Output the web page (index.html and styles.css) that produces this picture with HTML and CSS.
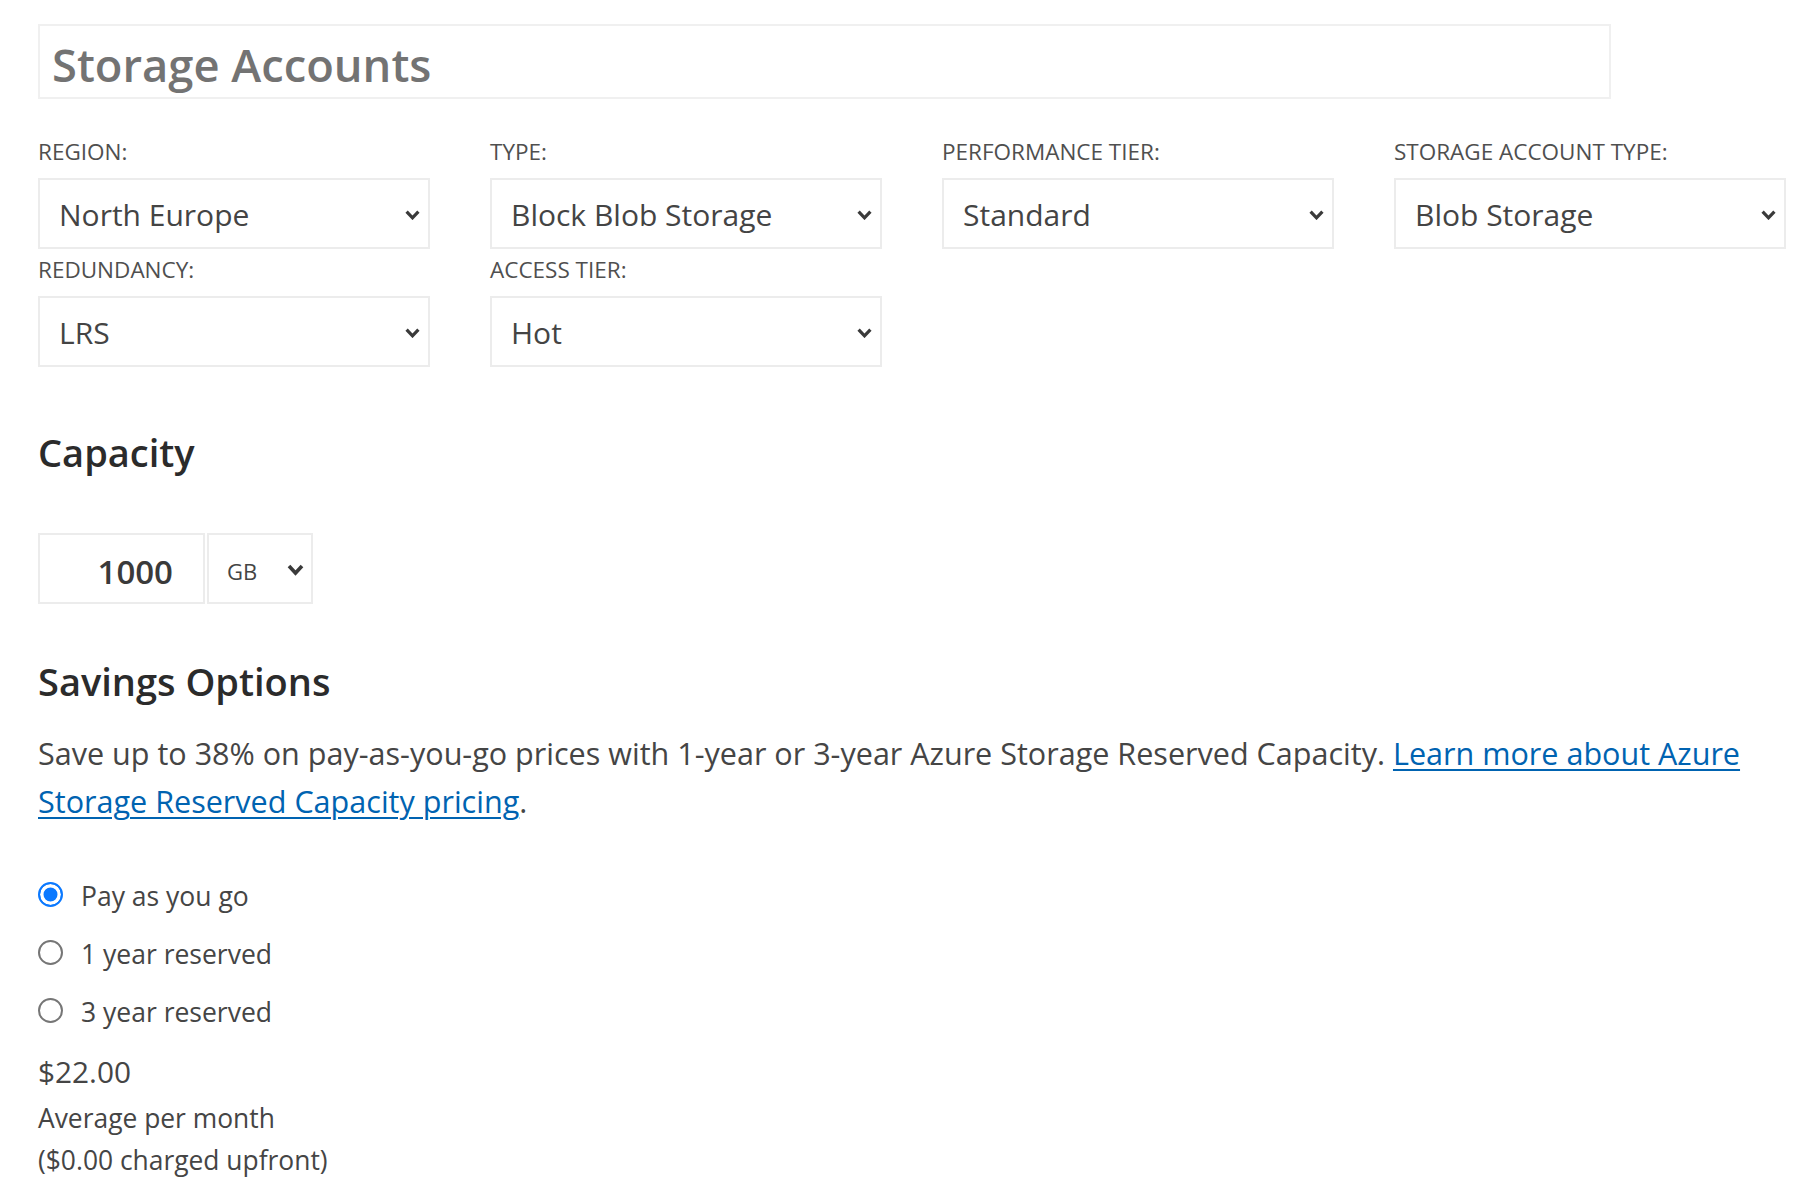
FILE: index.html
```html
<!DOCTYPE html>
<html lang="en">
<head>
<meta charset="utf-8">
<title>Storage Accounts</title>
<link rel="stylesheet" href="styles.css">
</head>
<body>
<main class="page">
  <div class="title-box">
    <h1 class="title">Storage Accounts</h1>
  </div>

  <div class="field-row field-row--first">
    <div class="field">
      <div class="field-label">REGION:</div>
      <div class="select"><span class="select-text">North Europe</span><svg class="chev" viewBox="0 0 15 10" width="15" height="10"><polyline points="1.6,1.6 7.5,7.8 13.4,1.6" fill="none" stroke="#3a3a3a" stroke-width="3.2"/></svg></div>
    </div>
    <div class="field">
      <div class="field-label">TYPE:</div>
      <div class="select"><span class="select-text">Block Blob Storage</span><svg class="chev" viewBox="0 0 15 10" width="15" height="10"><polyline points="1.6,1.6 7.5,7.8 13.4,1.6" fill="none" stroke="#3a3a3a" stroke-width="3.2"/></svg></div>
    </div>
    <div class="field">
      <div class="field-label">PERFORMANCE TIER:</div>
      <div class="select"><span class="select-text">Standard</span><svg class="chev" viewBox="0 0 15 10" width="15" height="10"><polyline points="1.6,1.6 7.5,7.8 13.4,1.6" fill="none" stroke="#3a3a3a" stroke-width="3.2"/></svg></div>
    </div>
    <div class="field">
      <div class="field-label">STORAGE ACCOUNT TYPE:</div>
      <div class="select"><span class="select-text">Blob Storage</span><svg class="chev" viewBox="0 0 15 10" width="15" height="10"><polyline points="1.6,1.6 7.5,7.8 13.4,1.6" fill="none" stroke="#3a3a3a" stroke-width="3.2"/></svg></div>
    </div>
  </div>

  <div class="field-row field-row--second">
    <div class="field">
      <div class="field-label">REDUNDANCY:</div>
      <div class="select"><span class="select-text">LRS</span><svg class="chev" viewBox="0 0 15 10" width="15" height="10"><polyline points="1.6,1.6 7.5,7.8 13.4,1.6" fill="none" stroke="#3a3a3a" stroke-width="3.2"/></svg></div>
    </div>
    <div class="field">
      <div class="field-label">ACCESS TIER:</div>
      <div class="select"><span class="select-text">Hot</span><svg class="chev" viewBox="0 0 15 10" width="15" height="10"><polyline points="1.6,1.6 7.5,7.8 13.4,1.6" fill="none" stroke="#3a3a3a" stroke-width="3.2"/></svg></div>
    </div>
  </div>

  <h2 class="section-heading heading-capacity">Capacity</h2>

  <div class="capacity-row">
    <div class="cap-input">1000</div>
    <div class="cap-unit"><span class="cap-unit-text">GB</span><svg class="chev-small" viewBox="0 0 17 12" width="17" height="12"><polyline points="2,2 8.5,9 15,2" fill="none" stroke="#3a3a3a" stroke-width="3.6"/></svg></div>
  </div>

  <h2 class="section-heading heading-savings">Savings Options</h2>

  <p class="savings-text">Save up to 38% on pay-as-you-go prices with 1-year or 3-year Azure Storage Reserved Capacity. <a class="link" href="#">Learn more about Azure Storage Reserved Capacity pricing</a>.</p>

  <div class="radio-group">
    <div class="radio-row"><span class="radio radio--checked"></span><span class="radio-label">Pay as you go</span></div>
    <div class="radio-row"><span class="radio"></span><span class="radio-label">1 year reserved</span></div>
    <div class="radio-row"><span class="radio"></span><span class="radio-label">3 year reserved</span></div>
  </div>

  <div class="price">$22.00</div>
  <div class="price-note">Average per month<br>($0.00 charged upfront)</div>
</main>
</body>
</html>
```

FILE: styles.css
```css
html, body {
  margin: 0;
  padding: 0;
  background: #ffffff;
}

body {
  font-family: "Open Sans", "Noto Sans", "DejaVu Sans", sans-serif;
  color: #454545;
}

.page {
  width: 1748px;
  padding: 24px 0 0 38px;
}

.title-box {
  box-sizing: border-box;
  width: 1573px;
  height: 75px;
  border: 2px solid #f0f0f0;
  padding: 16px 12px 0 12px;
}

.title {
  margin: 0;
  font-size: 45.3px;
  line-height: 45px;
  font-weight: 600;
  color: #737373;
}

.field-row {
  display: grid;
  grid-template-columns: repeat(4, 392px);
  column-gap: 60px;
}

.field-row--first {
  margin-top: 39.5px;
}

.field-row--second {
  margin-top: 7.5px;
}

.field-label {
  font-size: 22.5px;
  line-height: 26px;
  color: #4f4f4f;
  margin-bottom: 13.5px;
}

.select {
  box-sizing: border-box;
  height: 71px;
  border: 2px solid #ececec;
  display: flex;
  align-items: center;
  padding: 0 8px 0 19px;
  color: #444444;
}

.select-text {
  font-size: 30px;
  line-height: 30px;
  padding-top: 3.8px;
}

.chev {
  margin-left: auto;
  margin-top: 3px;
  flex: none;
}

.section-heading {
  margin: 0;
  font-size: 38px;
  line-height: 37px;
  font-weight: 600;
  color: #2b2b2b;
}

.heading-capacity {
  margin-top: 66.7px;
}

.capacity-row {
  display: flex;
  gap: 2px;
  margin-top: 62.3px;
}

.cap-input {
  box-sizing: border-box;
  width: 167px;
  height: 71px;
  border: 2px solid #ececec;
  display: flex;
  align-items: center;
  justify-content: flex-end;
  padding: 6.8px 30px 0 0;
  font-size: 33px;
  line-height: 33px;
  font-weight: 600;
  color: #3a3a3a;
}

.cap-unit {
  box-sizing: border-box;
  width: 106px;
  height: 71px;
  border: 2px solid #ececec;
  display: flex;
  align-items: center;
  padding: 0 7px 0 18px;
  color: #444444;
}

.cap-unit-text {
  font-size: 22px;
  line-height: 22px;
  padding-top: 5.4px;
}

.chev-small {
  margin-left: auto;
  margin-top: 3px;
  flex: none;
}

.heading-savings {
  margin-top: 59.3px;
}

.savings-text {
  margin: 29px 0 0 0;
  font-size: 30.55px;
  line-height: 48px;
  color: #454545;
}

.link {
  color: #0063b1;
  text-decoration: underline;
  text-underline-offset: 4px;
  text-decoration-thickness: 2px;
}

.radio-group {
  margin-top: 42px;
}

.radio-row {
  display: flex;
  align-items: center;
  gap: 18px;
  height: 58px;
}

.radio {
  box-sizing: border-box;
  width: 25px;
  height: 25px;
  border-radius: 50%;
  border: 2px solid #767676;
  background: #ffffff;
  flex: none;
  margin-bottom: 4.5px;
}

.radio--checked {
  border: 2.5px solid #0b79ff;
  background: #0b79ff;
  box-shadow: inset 0 0 0 3.5px #ffffff;
}

.radio-label {
  font-size: 26.5px;
  line-height: 34px;
  color: #454545;
}

.price {
  margin-top: 10.5px;
  font-size: 29.8px;
  line-height: 40px;
  color: #454545;
}

.price-note {
  margin-top: 5.5px;
  font-size: 26.4px;
  line-height: 42px;
  color: #454545;
}
```
